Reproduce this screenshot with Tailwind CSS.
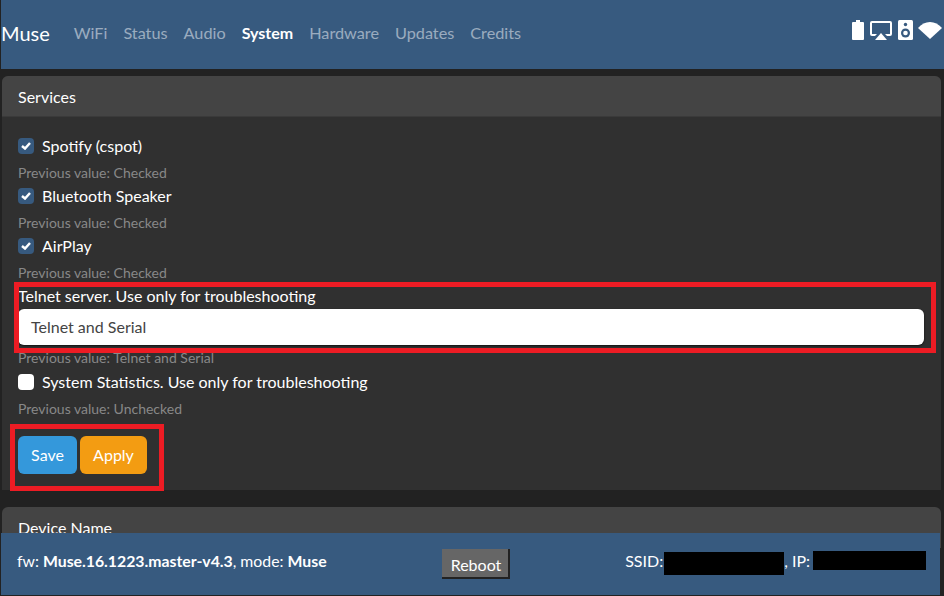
<!DOCTYPE html>
<html lang="en">
<head>
    <meta charset="UTF-8">
    <title>Muse</title>
    <script src="https://cdn.jsdelivr.net/npm/@tailwindcss/browser@4"></script>
</head>
<body class="bg-[#222222] font-['Lato',sans-serif] text-white overflow-hidden">
<div class="relative h-[596px] w-[944px] overflow-hidden pl-px">
    <!-- Navbar -->
    <nav class="h-[69px] bg-[#375a7f] flex items-center">
        <span class="text-xl mr-6 -mt-[3px]">Muse</span>
        <div class="flex gap-4 text-[16.250px] text-white/50 -mt-[3px]">
            <a href="#">WiFi</a>
            <a href="#">Status</a>
            <a href="#">Audio</a>
            <a href="#" class="text-white font-bold text-base">System</a>
            <a href="#">Hardware</a>
            <a href="#">Updates</a>
            <a href="#">Credits</a>
        </div>
        <div class="ml-auto flex items-start mr-[2px] mb-[9px] text-white">
            <svg width="12" height="20" viewBox="0 0 12 20" fill="currentColor"><path d="M4 0h4v2h3a1 1 0 0 1 1 1v16a1 1 0 0 1-1 1H1a1 1 0 0 1-1-1V3a1 1 0 0 1 1-1h3z"/></svg>
            <svg width="22" height="19" viewBox="0 0 22 19" fill="currentColor" class="ml-[6px] mt-px"><path fill-rule="evenodd" d="M2 0h18a2 2 0 0 1 2 2v11a2 2 0 0 1-2 2h-3l-2-2h5V2H2v11h5l-2 2H2a2 2 0 0 1-2-2V2a2 2 0 0 1 2-2z"/><path d="M11 12l6 7H5z"/></svg>
            <svg width="15" height="20" viewBox="0 0 15 20" class="ml-[6px]"><rect width="15" height="20" rx="1.500" fill="#fff"/><circle cx="7.500" cy="4.500" r="1.700" fill="#375a7f"/><circle cx="7.500" cy="13" r="4.500" fill="#375a7f"/><circle cx="7.500" cy="13" r="2.300" fill="#fff"/></svg>
            <svg width="24" height="17" viewBox="0 0 24 17" fill="currentColor" class="ml-[5px] mt-[2px]"><path d="M12 17L0 6C3.400 2.300 7.500 0 12 0s8.600 2.300 12 6z"/></svg>
        </div>
    </nav>

    <main class="pt-[7px] pl-px pr-[3px]">
        <!-- Services card -->
        <section class="rounded-t-md bg-[#303030]">
            <h2 class="h-[41px] bg-[#444444] rounded-t-md px-4 pt-px flex items-center border-b border-[#3a3a3a]">Services</h2>
            <div class="px-4 pt-[17px] h-[373px]">
                <label class="flex items-center gap-2 h-[24px]">
                    <span class="w-4 h-4 rounded-[4px] bg-[#375a7f] flex items-center justify-center"><svg width="10" height="8" viewBox="0 0 10 8" fill="none" stroke="#fff" stroke-width="2.500"><path d="M1 4l3 2.500L9 1"/></svg></span>
                    Spotify (cspot)
                </label>
                <p class="text-sm text-[#888888] mt-[4px] mb-[1px] h-[21px] leading-[21px]">Previous value: Checked</p>
                <label class="flex items-center gap-2 h-[24px]">
                    <span class="w-4 h-4 rounded-[4px] bg-[#375a7f] flex items-center justify-center"><svg width="10" height="8" viewBox="0 0 10 8" fill="none" stroke="#fff" stroke-width="2.500"><path d="M1 4l3 2.500L9 1"/></svg></span>
                    Bluetooth Speaker
                </label>
                <p class="text-sm text-[#888888] mt-[4px] mb-[1px] h-[21px] leading-[21px]">Previous value: Checked</p>
                <label class="flex items-center gap-2 h-[24px]">
                    <span class="w-4 h-4 rounded-[4px] bg-[#375a7f] flex items-center justify-center"><svg width="10" height="8" viewBox="0 0 10 8" fill="none" stroke="#fff" stroke-width="2.500"><path d="M1 4l3 2.500L9 1"/></svg></span>
                    AirPlay
                </label>
                <p class="text-sm text-[#888888] mt-[4px] h-[21px] leading-[21px]">Previous value: Checked</p>
                <label class="block h-6 leading-6 mt-px">Telnet server. Use only for troubleshooting</label>
                <div class="h-[36px] mt-px mr-[1px] bg-white rounded-md shadow-[0_1px_2px_#111] text-[#444444] pl-[13px] pr-3 flex items-center">Telnet and Serial</div>
                <p class="text-sm text-[#888888] h-[21px] leading-[21px] mt-[2px]">Previous value: Telnet and Serial</p>
                <label class="flex items-center gap-2 h-[24px] mt-[2px]">
                    <span class="w-4 h-4 rounded-[4px] bg-white"></span>
                    System Statistics. Use only for troubleshooting
                </label>
                <p class="text-sm text-[#888888] mt-[4px] mb-[1px] h-[21px] leading-[21px]">Previous value: Unchecked</p>
                <div class="flex gap-[3px] mt-[17px]">
                    <button class="w-[59px] h-[38px] rounded-md bg-[#3498db]">Save</button>
                    <button class="w-[67px] h-[38px] rounded-md bg-[#f39c12]">Apply</button>
                </div>
            </div>
        </section>

        <!-- Device name card, cut off by the footer -->
        <section class="mt-[17px] rounded-t-md bg-[#444444] h-[41px] px-4 pt-[9px]">Device Name</section>
    </main>

    <!-- Footer -->
    <footer class="absolute left-px top-[533px] w-[939px] h-[62px] bg-[#375a7f] flex items-center">
        <span class="ml-4 text-[15.800px] w-[425px] -mt-[6px]">fw: <b>Muse.16.1223.master-v4.3</b>, mode: <b>Muse</b></span>
        <button class="w-[68px] h-[30px] bg-[#666666] border-r-2 border-b-2 border-[#222222] text-white pl-[2px] pt-[3px]">Reboot</button>
        <div class="ml-auto mr-[14px] flex items-start -mt-[6px]">
            <span class="mr-px">SSID:</span>
            <span class="w-[120px] h-[23px] bg-black mt-[3px] -mb-[3px]"></span>
            <span>, IP:</span>
            <span class="w-[113px] h-[19px] bg-black ml-[3px] mt-[2px]"></span>
        </div>
    </footer>

    <!-- Red annotation boxes -->
    <div class="absolute left-[14px] top-[282px] w-[922px] h-[71px] border-[5px] border-[#ed1c24]"></div>
    <div class="absolute left-[10px] top-[424px] w-[154px] h-[67px] border-[5px] border-[#ed1c24]"></div>
</div>
</body>
</html>
